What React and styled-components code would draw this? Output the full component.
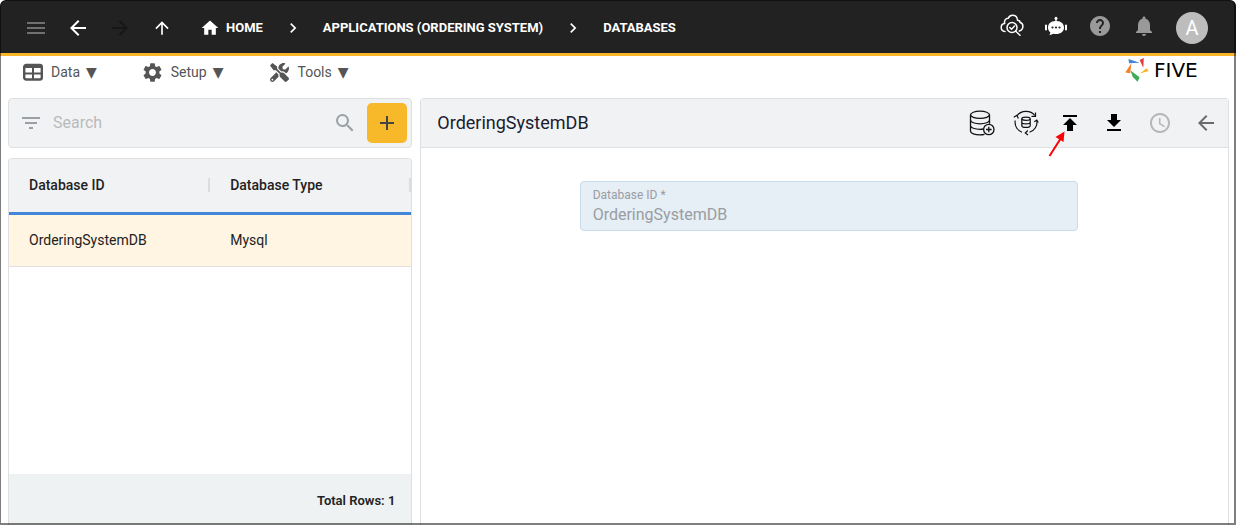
import React from 'react';
import styled, { createGlobalStyle } from 'styled-components';
import {
  MdMenu, MdArrowBack, MdArrowForward, MdArrowUpward, MdHome, MdChevronRight,
  MdHelp, MdNotifications, MdFilterList, MdSearch, MdAdd, MdAccessTime,
  MdPublish, MdFileDownload, MdSettings,
} from 'react-icons/md';
import { FaTools } from 'react-icons/fa';

const GlobalStyle = createGlobalStyle`
  *, *::before, *::after { box-sizing: border-box; }
  body {
    margin: 0;
    background: #fff;
    color: #222;
    font-family: Roboto, "Liberation Sans", sans-serif;
    font-size: 14px;
  }
  button, input { font: inherit; color: inherit; }
`;

const Frame = styled.div`
  position: relative;
  display: flex;
  flex-direction: column;
  min-height: 100vh;
  border-radius: 6px 6px 0 0;
  overflow: hidden;

  &::after {
    content: '';
    position: absolute;
    inset: 0;
    border: solid rgba(0, 0, 0, 0.5);
    border-width: 1px 2px 2px 1px;
    border-radius: 6px 6px 0 0;
    pointer-events: none;
  }
`;

const TopBar = styled.header`
  display: flex;
  align-items: center;
  justify-content: space-between;
  height: 56px;
  padding: 3px 28px 0 16px;
  background: #222;
  border-bottom: 3px solid #f9b52a;
  color: #fff;
`;

const Cluster = styled.div`
  display: flex;
  align-items: center;
  gap: ${(p) => p.$gap || 0}px;
`;

const Status = styled(Cluster)`
  padding-bottom: 4px;
`;

const TopActions = styled(Cluster)`
  gap: 10px;
`;

const IconButton = styled.button`
  display: inline-flex;
  align-items: center;
  justify-content: center;
  position: relative;
  width: ${(p) => p.$width || 40}px;
  height: 40px;
  padding: 0;
  border: 0;
  background: none;
  color: ${(p) => p.$color || 'inherit'};
  cursor: pointer;
  svg { flex: none; }
`;

const Crumbs = styled.nav`
  display: flex;
  align-items: center;
  gap: 20px;
  margin-left: 16px;
  svg { flex: none; }
`;

const Crumb = styled.a`
  display: inline-flex;
  align-items: center;
  gap: 6px;
  color: #fff;
  font-size: 13px;
  line-height: 20px;
  font-weight: 700;
  text-decoration: none;
  white-space: nowrap;
`;

const Avatar = styled.button`
  width: 32px;
  height: 32px;
  padding: 0;
  border: 0;
  border-radius: 50%;
  background: #bdbdbd;
  color: #fff;
  font-size: 20px;
  line-height: 32px;
`;

const MenuBar = styled.div`
  display: flex;
  align-items: center;
  justify-content: space-between;
  height: 32px;
  margin-bottom: 10px;
  padding: 0 24px 0 21px;
`;

const MenuButton = styled.button`
  display: inline-flex;
  align-items: center;
  gap: 6px;
  padding: 0;
  border: 0;
  background: none;
  color: #555;
  font-size: 14px;
  line-height: 20px;
  cursor: pointer;
`;

const IconSlot = styled.span`
  display: inline-flex;
  justify-content: center;
  width: 24px;
`;

const Caret = styled.span`
  font-family: "DejaVu Sans", sans-serif;
  font-size: 14px;
`;

const Brand = styled.a`
  display: inline-flex;
  align-items: flex-start;
  gap: 5px;
  padding-bottom: 4px;
  color: #000;
  text-decoration: none;
`;

const BrandName = styled.span`
  width: 58px;
  font-family: "DejaVu Sans", sans-serif;
  font-size: 20px;
  line-height: 24px;
`;

const Workspace = styled.main`
  flex: 1;
  display: grid;
  grid-template-columns: minmax(0, 1fr) minmax(0, 2fr);
  gap: 8px;
  padding: 0 7px 0 8px;
`;

const Sidebar = styled.section`
  display: flex;
  flex-direction: column;
  gap: 10px;
`;

const SearchBar = styled.div`
  display: flex;
  align-items: center;
  height: 50px;
  padding: 0 4px 0 2px;
  border: 1px solid #dedfe0;
  border-radius: 4px;
  background: #f1f2f4;
`;

const SearchInput = styled.input`
  flex: 1;
  min-width: 0;
  padding: 0 2px;
  border: 0;
  outline: 0;
  background: none;
  font-size: 16px;
  line-height: 24px;
  &::placeholder { color: #b9bbbd; opacity: 1; }
`;

const AddButton = styled(IconButton)`
  margin-left: 2px;
  border-radius: 5px;
  background: #f7b829;
  color: #444;
`;

const ListPanel = styled.div`
  flex: 1;
  display: flex;
  flex-direction: column;
  border: 1px solid #dedfe0;
  border-bottom: 0;
  border-radius: 4px 4px 0 0;
  overflow: hidden;
`;

const Grid = styled.table`
  width: 100%;
  table-layout: fixed;
  border-collapse: separate;
  border-spacing: 0;
  text-align: left;
`;

const HeadCell = styled.th`
  height: 56px;
  padding: 0 0 2px;
  border-bottom: 3px solid #4285d9;
  background: #f1f2f4;
  font-size: 14px;
  font-weight: 500;
`;

const HeadLabel = styled.div`
  padding: 0 20px;
  border-right: 2px solid #dcddde;
  line-height: 14px;
`;

const Cell = styled.td`
  height: 52px;
  padding: 0 20px 2px;
  border-bottom: 1px solid #e0e0e0;
  background: #fff5e2;
  font-size: 14px;
`;

const ListFooter = styled.footer`
  margin-top: auto;
  padding: 17px 16px 14px;
  background: #eef2f3;
  font-size: 13px;
  line-height: 20px;
  font-weight: 600;
  text-align: right;
`;

const Detail = styled.section`
  border: 1px solid #dedfe0;
  border-bottom: 0;
  border-radius: 4px 4px 0 0;
`;

const DetailHeader = styled.div`
  display: flex;
  align-items: center;
  justify-content: space-between;
  height: 49px;
  padding-left: 16px;
  border-bottom: 1px solid #dedfe0;
  background: #f1f2f4;
`;

const Title = styled.h1`
  margin: 0;
  color: #1a2030;
  font-size: 18px;
  line-height: 24px;
  font-weight: 400;
`;

const Pointer = styled.svg`
  position: absolute;
  left: 0;
  top: 26px;
  pointer-events: none;
`;

const Form = styled.form`
  display: flex;
  justify-content: center;
  padding: 33px 8px 32px 16px;
`;

const Field = styled.label`
  display: flex;
  flex-direction: column;
  width: 100%;
  max-width: 498px;
  height: 50px;
  padding: 5px 12px;
  border: 1px solid #c9dbee;
  border-radius: 4px;
  background: #e6eef6;
  color: #999da2;
`;

const FieldLabel = styled.span`
  font-size: 12px;
  line-height: 16px;
`;

const FieldInput = styled.input`
  width: 100%;
  padding: 0;
  border: 0;
  background: none;
  color: #999da2;
  font-size: 16px;
  line-height: 24px;
`;

const CloudSearchIcon = () => (
  <svg width="24" height="24" viewBox="0 0 24 24" fill="none" stroke="currentColor" strokeWidth="1.500" strokeLinecap="round" strokeLinejoin="round">
    <path d="M5 17.500C2.600 17.200 1.200 15.400 1.200 13.400 1.200 11.200 2.700 9.700 4.700 9.500 3.900 6.800 5.600 4.300 8.100 4.300 9.100 2.300 10.700 1.300 12.500 1.300 15.400 1.300 17.300 3.400 17.500 6.200 19.300 6.200 20.100 7.300 20.100 8.600 21.900 9 22.900 10.500 22.900 12.300 22.900 14.800 21.400 16.500 19.300 17" />
    <circle cx="12" cy="13.500" r="5" />
    <path d="M9.800 13.500l1.700 1.700 3-3.200M15.700 17.200l4.300 4" />
  </svg>
);

const RobotIcon = () => (
  <svg width="24" height="24" viewBox="0 0 24 24" fill="currentColor">
    <path d="M11.300 7V5.800a1.500 1.500 0 1 1 1.400 0V7c4.500.2 7.300 2.700 7.300 6.500 0 4.100-3.200 6.500-8 6.500-.9 0-1.700-.1-2.500-.3L5.500 21.300l.9-3C4.800 17.200 4 15.600 4 13.500 4 9.700 6.800 7.200 11.300 7z" />
    <rect x="1" y="10.500" width="2" height="6" rx="1" />
    <rect x="21" y="10.500" width="2" height="6" rx="1" />
    <g fill="#222">
      <circle cx="8.500" cy="13.500" r="1.100" />
      <circle cx="12" cy="13.500" r="1.100" />
      <circle cx="15.500" cy="13.500" r="1.100" />
    </g>
  </svg>
);

const TableIcon = () => (
  <svg width="20" height="18" viewBox="0 0 20 18" fill="none" stroke="currentColor" strokeWidth="2">
    <rect x="1.200" y="2" width="17.600" height="14.500" rx="2" strokeWidth="2.400" />
    <path d="M2 3.500h16" strokeWidth="3" />
    <path d="M1 10.500h18M10 3v13" />
  </svg>
);

const DatabaseAddIcon = () => (
  <svg width="26" height="26" viewBox="0 0 26 26" fill="none" stroke="currentColor" strokeWidth="1.300">
    <ellipse cx="11" cy="4.800" rx="9.500" ry="3.600" />
    <path d="M1.500 4.800v16.500c0 2 4.300 3.500 9.500 3.500 1.700 0 3.200-.2 4.500-.5M20.500 4.800v9" />
    <path d="M1.500 10.200c0 2 4.300 3.600 9.500 3.600s9.500-1.600 9.500-3.600M1.500 15.700c0 2 4.300 3.600 9.500 3.600 1.100 0 2.200-.1 3.200-.3" />
    <circle cx="19.800" cy="19.500" r="5.200" />
    <path d="M19.800 16.700v5.600M17 19.500h5.600" />
  </svg>
);

const DatabaseSyncIcon = () => (
  <svg width="26" height="26" viewBox="0 0 26 26" fill="none" stroke="currentColor" strokeWidth="1.200">
    <path d="M3.800 6C8-.2 17.500-.2 22 5.500M23.800 10.500c1 5.300-2.300 10.200-7.300 11.800M9 22.200C4 20.200 1.500 15.500 2.200 10.500" />
    <path d="M22.500 2.500v3.800h-4M.8 7.300l3-2 1.600 3.200M25.300 12.500l-1.500-2.500-2.500 1.800M14.800 20.500L12.300 23l2.700 2" />
    <ellipse cx="13" cy="8.800" rx="4.200" ry="1.600" />
    <path d="M8.800 8.800v6.900c0 1 1.900 1.700 4.200 1.700s4.200-.7 4.200-1.700V8.800M8.800 12.300c0 1 1.900 1.600 4.200 1.600s4.200-.6 4.200-1.600" />
  </svg>
);

const BrandMark = () => (
  <svg width="24" height="24" viewBox="0 0 24 24">
    <path fill="#4285d9" d="M3.500 1l11.200 3.800L4 5.200z" />
    <path fill="#e23b3b" d="M18.800 0l-.5 9.800L14.600 2z" />
    <path fill="#f7b829" d="M21.400 10.200l2.400 2.900L15 15.600z" />
    <path fill="#3fab55" d="M5.500 12.500l9.100 6.800-2 4.500L7.800 19z" />
    <path fill="#f5802c" d="M6.300 5.200l-1 10-5-.6z" />
  </svg>
);

const menus = [
  { label: 'Data', icon: <TableIcon /> },
  { label: 'Setup', icon: <MdSettings size={23} /> },
  { label: 'Tools', icon: <FaTools size={19} /> },
];

const rows = [{ id: 'OrderingSystemDB', type: 'Mysql' }];

export default function App() {
  return (
    <>
      <GlobalStyle />
      <Frame>
        <TopBar>
          <Cluster $gap={2}>
            <IconButton aria-label="Menu" $color="#707070"><MdMenu size={24} /></IconButton>
            <IconButton aria-label="Back"><MdArrowBack size={24} /></IconButton>
            <IconButton aria-label="Forward" $color="#161616"><MdArrowForward size={24} /></IconButton>
            <IconButton aria-label="Up"><MdArrowUpward size={20} /></IconButton>
            <Crumbs aria-label="Breadcrumb">
              <Crumb href="#home"><MdHome size={20} />HOME</Crumb>
              <MdChevronRight size={20} />
              <Crumb href="#applications">APPLICATIONS (ORDERING SYSTEM)</Crumb>
              <MdChevronRight size={20} />
              <Crumb href="#databases">DATABASES</Crumb>
            </Crumbs>
          </Cluster>
          <TopActions>
            <Status>
              <IconButton $width={44} aria-label="Inspect cloud"><CloudSearchIcon /></IconButton>
              <IconButton $width={44} aria-label="Assistant"><RobotIcon /></IconButton>
              <IconButton $width={44} aria-label="Help" $color="#999"><MdHelp size={24} /></IconButton>
              <IconButton $width={44} aria-label="Notifications" $color="#999"><MdNotifications size={24} /></IconButton>
            </Status>
            <Avatar aria-label="Account">A</Avatar>
          </TopActions>
        </TopBar>

        <MenuBar>
          <Cluster $gap={44}>
            {menus.map((m) => (
              <MenuButton key={m.label}>
                <IconSlot>{m.icon}</IconSlot>
                {m.label}
                <Caret>▼</Caret>
              </MenuButton>
            ))}
          </Cluster>
          <Brand href="#five"><BrandMark /><BrandName>FIVE</BrandName></Brand>
        </MenuBar>

        <Workspace>
          <Sidebar>
            <SearchBar>
              <IconButton aria-label="Filter" $color="#9aa0a6"><MdFilterList size={24} /></IconButton>
              <SearchInput type="search" placeholder="Search" aria-label="Search" />
              <IconButton aria-label="Run search" $color="#9aa0a6"><MdSearch size={24} /></IconButton>
              <AddButton aria-label="Add database"><MdAdd size={24} /></AddButton>
            </SearchBar>
            <ListPanel>
              <Grid>
                <thead>
                  <tr>
                    <HeadCell scope="col"><HeadLabel>Database ID</HeadLabel></HeadCell>
                    <HeadCell scope="col"><HeadLabel>Database Type</HeadLabel></HeadCell>
                  </tr>
                </thead>
                <tbody>
                  {rows.map((r) => (
                    <tr key={r.id}>
                      <Cell>{r.id}</Cell>
                      <Cell>{r.type}</Cell>
                    </tr>
                  ))}
                </tbody>
              </Grid>
              <ListFooter>Total Rows: {rows.length}</ListFooter>
            </ListPanel>
          </Sidebar>

          <Detail>
            <DetailHeader>
              <Title>OrderingSystemDB</Title>
              <Cluster>
                <IconButton $width={44} aria-label="Add table" $color="#111"><DatabaseAddIcon /></IconButton>
                <IconButton $width={44} aria-label="Synchronize" $color="#111"><DatabaseSyncIcon /></IconButton>
                <IconButton $width={44} aria-label="Import" $color="#000">
                  <MdPublish size={24} />
                  <Pointer width="20" height="32" viewBox="0 0 20 32">
                    <path d="M1.500 27L13 9" stroke="#fb0007" strokeWidth="2" />
                    <path d="M16.500 2.500l-1 10.500-8-5z" fill="#fb0007" />
                  </Pointer>
                </IconButton>
                <IconButton $width={44} aria-label="Export" $color="#000"><MdFileDownload size={24} /></IconButton>
                <IconButton $width={48} aria-label="History" $color="#b5b6b8"><MdAccessTime size={24} /></IconButton>
                <IconButton $width={44} aria-label="Close" $color="#6b6b6b"><MdArrowBack size={24} /></IconButton>
              </Cluster>
            </DetailHeader>
            <Form>
              <Field>
                <FieldLabel>Database ID *</FieldLabel>
                <FieldInput defaultValue="OrderingSystemDB" disabled />
              </Field>
            </Form>
          </Detail>
        </Workspace>
      </Frame>
    </>
  );
}
